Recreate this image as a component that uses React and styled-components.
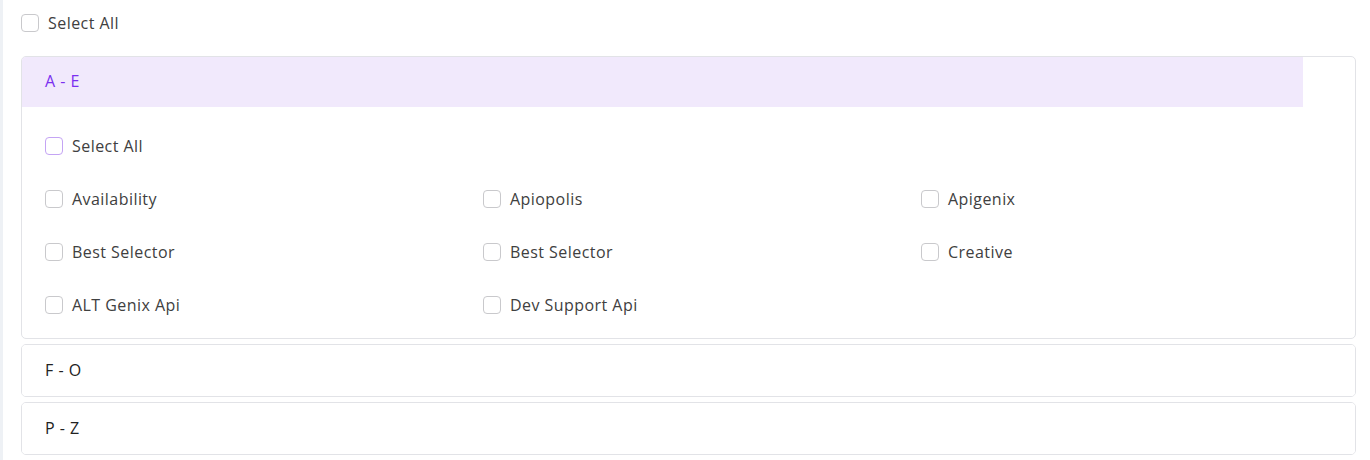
import styled, { createGlobalStyle } from 'styled-components';

const GlobalStyle = createGlobalStyle`
  body {
    margin: 0;
    background: #ffffff;
    font-family: "Open Sans", "Liberation Sans", sans-serif;
  }
`;

const groups = [
  {
    label: 'A - E',
    open: true,
    items: [
      'Availability', 'Apiopolis', 'Apigenix',
      'Best Selector', 'Best Selector', 'Creative',
      'ALT Genix Api', 'Dev Support Api',
    ],
  },
  { label: 'F - O', open: false, items: [] },
  { label: 'P - Z', open: false, items: [] },
];

function Check({ label, accent }) {
  return (
    <CheckRow>
      <Box $accent={accent} />
      <span>{label}</span>
    </CheckRow>
  );
}

function App() {
  return (
    <Page>
      <GlobalStyle />
      <Panel>
        <TopRow>
          <Check label="Select All" />
        </TopRow>
        {groups.map((g) => (
          <Card key={g.label}>
            <Header $open={g.open}>{g.label}</Header>
            {g.open && (
              <Body>
                <SelectRow>
                  <Check label="Select All" accent />
                </SelectRow>
                {g.items.map((item, i) => (
                  <Check key={i} label={item} />
                ))}
              </Body>
            )}
          </Card>
        ))}
      </Panel>
    </Page>
  );
}

const Page = styled.div`
  min-height: 460px;
  background: #eef1f5;
  padding-left: 3px;
  display: flex;
`;

const Panel = styled.div`
  flex: 1;
  min-width: 0;
  background: #ffffff;
  padding: 5px 14px 6px 18px;
  display: flex;
  flex-direction: column;
  gap: 5px;
`;

const TopRow = styled.div`
  height: 36px;
  display: flex;
  align-items: center;
  margin-bottom: 10px;
`;

const CheckRow = styled.label`
  display: flex;
  align-items: center;
  gap: 9px;
  height: 36px;
  font-size: 16px;
  letter-spacing: 0.45px;
  color: #404040;
  cursor: pointer;
`;

const Box = styled.span`
  width: 16px;
  height: 16px;
  border: 1px solid ${(p) => (p.$accent ? '#c4a4f4' : '#c9c9cc')};
  border-radius: 4px;
  background: #fff;
  flex-shrink: 0;
`;

const Card = styled.div`
  border: 1px solid #e2e3e7;
  border-radius: 5px;
  background: #fff;
  overflow: hidden;
  min-width: 0;
`;

const Header = styled.div`
  height: ${(p) => (p.$open ? '50px' : '51px')};
  width: ${(p) => (p.$open ? 'calc(100% - 52px)' : '100%')};
  display: flex;
  align-items: center;
  padding: 0 0 2px 23px;
  box-sizing: border-box;
  font-size: 16px;
  letter-spacing: 0.5px;
  color: ${(p) => (p.$open ? '#7b2ff0' : '#222222')};
  background: ${(p) => (p.$open ? '#f1e9fc' : '#ffffff')};
`;

const Body = styled.div`
  display: grid;
  grid-template-columns: repeat(3, 438px);
  row-gap: 17px;
  padding: 21px 0 15px 23px;
`;

const SelectRow = styled.div`
  grid-column: 1 / -1;
`;

export default App;
